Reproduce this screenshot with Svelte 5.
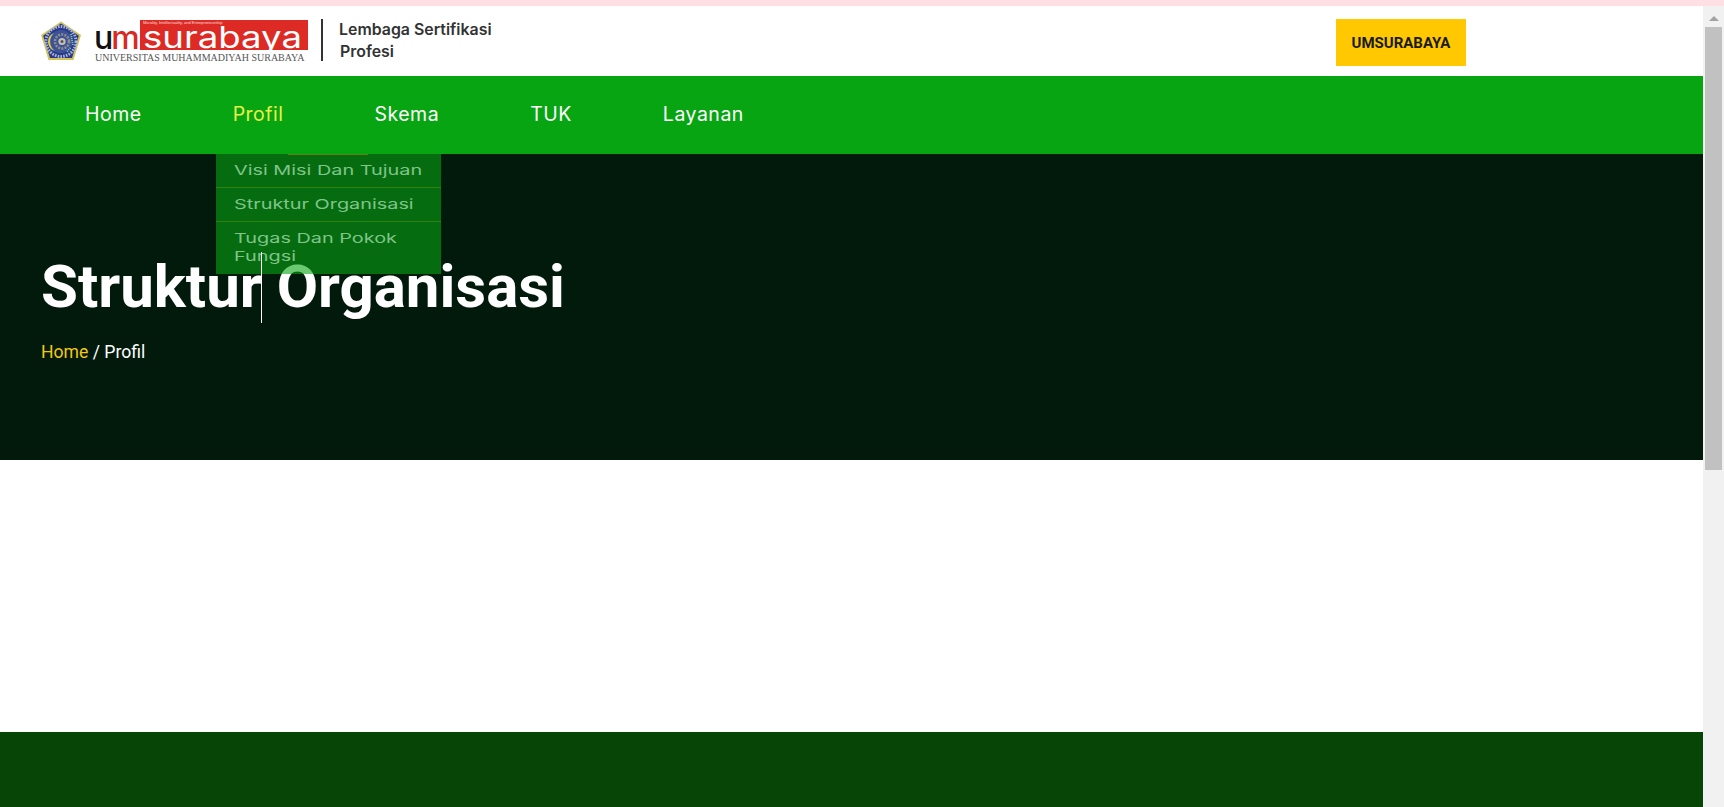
<script lang="ts">
const navItems = [
    { name: 'Home' },
    { name: 'Profil', active: true },
    { name: 'Skema' },
    { name: 'TUK' },
    { name: 'Layanan' },
]
const dropItems = ['Visi Misi Dan Tujuan', 'Struktur Organisasi', 'Tugas Dan Pokok Fungsi']
</script>

<div class="strip"></div>
<div class="window">
    <div class="page">
        <header>
            <div class="brand">
                <svg class="emblem" viewBox="0 0 42 42" aria-hidden="true">
                    <path d="M21 0.5 L41 14 L33.5 39 L8.5 39 L1 14 Z" fill="#cfc35a" />
                    <path d="M21 2.5 L38.8 14.8 L32 37 L10 37 L3.2 14.8 Z" fill="#2a3a86" />
                    <circle cx="21" cy="20.5" r="15" fill="none" stroke="#a9b4dc" stroke-width="3" stroke-dasharray="1.6 1.2" />
                    <circle cx="21" cy="20.5" r="11.5" fill="#3d5199" />
                    <path d="M14 12 A11.5 11.5 0 0 0 15 30 A9.5 9.5 0 0 1 14 12 Z" fill="#dccd4e" />
                    <circle cx="22" cy="20.5" r="7" fill="none" stroke="#8f8f86" stroke-width="2.6" stroke-dasharray="2 1.2" />
                    <circle cx="22" cy="20.5" r="3.6" fill="#c4c2b4" />
                    <circle cx="22" cy="20.5" r="1.5" fill="#555" />
                    <path d="M31 13 L33 24 M30.5 27 L27 30.5" stroke="#7fd6c8" stroke-width="1.8" stroke-dasharray="1 1" fill="none" />
                </svg>
                <div class="wordmark">
                    <div class="mark-row">
                        <span class="um"><b>u</b><i>m</i></span>
                        <span class="surabaya">
                            <small>Morality, Intellectuality, and Entrepreneurship</small>
                            <span class="sura-text">surabaya</span>
                        </span>
                    </div>
                    <div class="uni">UNIVERSITAS MUHAMMADIYAH SURABAYA</div>
                </div>
                <div class="divider"></div>
                <div class="lsp">Lembaga Sertifikasi<br /><span>Profesi</span></div>
            </div>
            <a href="/" class="cta">UMSURABAYA</a>
        </header>

        <nav>
            {#each navItems as item}
                <a href="/" class={item.active ? 'active' : ''}>{item.name}</a>
            {/each}
            <div class="dropdown">
                <span class="rim"></span>
                <ul>
                    {#each dropItems as drop}
                        <li><span>{drop}</span></li>
                    {/each}
                </ul>
            </div>
        </nav>

        <section class="hero">
            <h1>Struktur Organisasi</h1>
            <p><a href="/">Home</a> / Profil</p>
        </section>

        <main></main>
        <footer></footer>
        <span class="caret"></span>
    </div>
    <div class="scrollbar">
        <span class="arrow"></span>
        <span class="thumb"></span>
    </div>
</div>

<style>
:global(body) {
    margin: 0;
    overflow: hidden;
    background: #fff;
}
.strip {
    height: 6px;
    background: #fddfe4;
}
.window {
    display: flex;
    height: 801px;
    overflow: hidden;
}
.page {
    flex: 1;
    position: relative;
    display: flex;
    flex-direction: column;
    font-family: Roboto, sans-serif;
}
header {
    height: 70px;
    flex: none;
    display: flex;
    align-items: flex-start;
    justify-content: space-between;
    padding-left: 40px;
    padding-right: 237px;
    background: #fff;
}
.brand {
    display: flex;
    align-items: flex-start;
}
.emblem {
    width: 42px;
    height: 42px;
    margin-top: 15px;
}
.wordmark {
    margin: 14px 0 0 12px;
    width: 214px;
}
.mark-row {
    display: flex;
    align-items: stretch;
    height: 30px;
}
.um {
    width: 46px;
    padding-top: 4px;
    box-sizing: border-box;
    font-family: Inter, sans-serif;
    font-weight: 500;
    font-size: 32px;
    line-height: 28px;
    letter-spacing: -2px;
}
.um b {
    color: #111;
    font-weight: 500;
}
.um i {
    color: #d92a22;
    font-style: normal;
}
.surabaya {
    width: 168px;
    background: #dd2a24;
    color: #fff;
    position: relative;
}
.surabaya small {
    position: absolute;
    left: 3px;
    top: 0;
    font-family: "Liberation Sans", sans-serif;
    font-size: 4px;
    line-height: 5px;
    white-space: nowrap;
    opacity: .8;
}
.sura-text {
    position: absolute;
    left: 3px;
    top: 5px;
    font-family: Inter, sans-serif;
    font-weight: 400;
    font-size: 30px;
    line-height: 24px;
    transform: scaleX(1.22);
    transform-origin: left center;
}
.uni {
    margin: 2px 0 0 1px;
    font-family: "Liberation Serif", serif;
    font-size: 10px;
    line-height: 12px;
    color: #555;
    white-space: nowrap;
}
.divider {
    width: 2px;
    height: 42px;
    margin: 13px 0 0 13px;
    background: #333;
}
.lsp {
    margin: 13px 0 0 16px;
    font-family: Inter, sans-serif;
    font-weight: 600;
    font-size: 15.9px;
    line-height: 22px;
    color: #333;
}
.lsp span {
    margin-left: 1px;
}
.cta {
    margin-top: 13px;
    width: 130px;
    height: 47px;
    background: #ffc800;
    color: #1a1a1a;
    font-weight: 700;
    font-size: 15px;
    display: flex;
    align-items: center;
    justify-content: center;
    text-decoration: none;
}
nav {
    height: 78px;
    flex: none;
    box-sizing: border-box;
    padding: 0 0 2px 85px;
    position: relative;
    display: flex;
    align-items: center;
    gap: 91px;
    background: #08a512;
}
nav a {
    color: #fff;
    font-family: Inter, sans-serif;
    font-size: 19.5px;
    letter-spacing: .5px;
    text-decoration: none;
}
nav a.active {
    color: #e8f04a;
}
.dropdown {
    position: absolute;
    left: 216px;
    top: 78px;
    width: 225px;
    height: 120px;
    background: rgba(8, 165, 18, .6);
    z-index: 2;
}
.rim {
    position: absolute;
    left: 72px;
    top: 0;
    width: 80px;
    height: 1px;
    background: #5f8012;
}
ul {
    list-style: none;
    margin: 0;
    padding: 0;
}
li {
    padding: 0 16px 0 18px;
    border-bottom: 1px solid #2f8212;
    color: #80c48a;
    font-family: Inter, sans-serif;
    font-size: 13.5px;
}
li span {
    display: block;
    width: 135px;
    transform: scaleX(1.47);
    transform-origin: left center;
    line-height: 17.5px;
    padding: 8px 0 7.5px;
}
li:last-child {
    border: none;
}
.hero {
    height: 306px;
    flex: none;
    padding-left: 41px;
    background: #011a0c;
    color: #fff;
    box-sizing: border-box;
}
h1 {
    margin: 0;
    padding-top: 98px;
    font-size: 60px;
    line-height: 70px;
    font-weight: 700;
}
.hero p {
    margin: 17px 0 0;
    font-size: 17.6px;
    line-height: 26px;
}
.hero p a {
    color: #f5c810;
    text-decoration: none;
}
main {
    height: 272px;
    flex: none;
    background: #fff;
}
footer {
    flex: 1;
    background: #064506;
}
.caret {
    position: absolute;
    left: 261px;
    top: 246px;
    width: 1px;
    height: 71px;
    background: #fff;
    z-index: 3;
}
.scrollbar {
    width: 21px;
    flex: none;
    position: relative;
    background: #f1f1f1;
}
.arrow {
    position: absolute;
    left: 6px;
    top: 10px;
    border-left: 5px solid transparent;
    border-right: 5px solid transparent;
    border-bottom: 5px solid #a3a3a3;
}
.thumb {
    position: absolute;
    left: 2px;
    top: 21px;
    width: 17px;
    height: 443px;
    background: #c1c1c1;
}
</style>
